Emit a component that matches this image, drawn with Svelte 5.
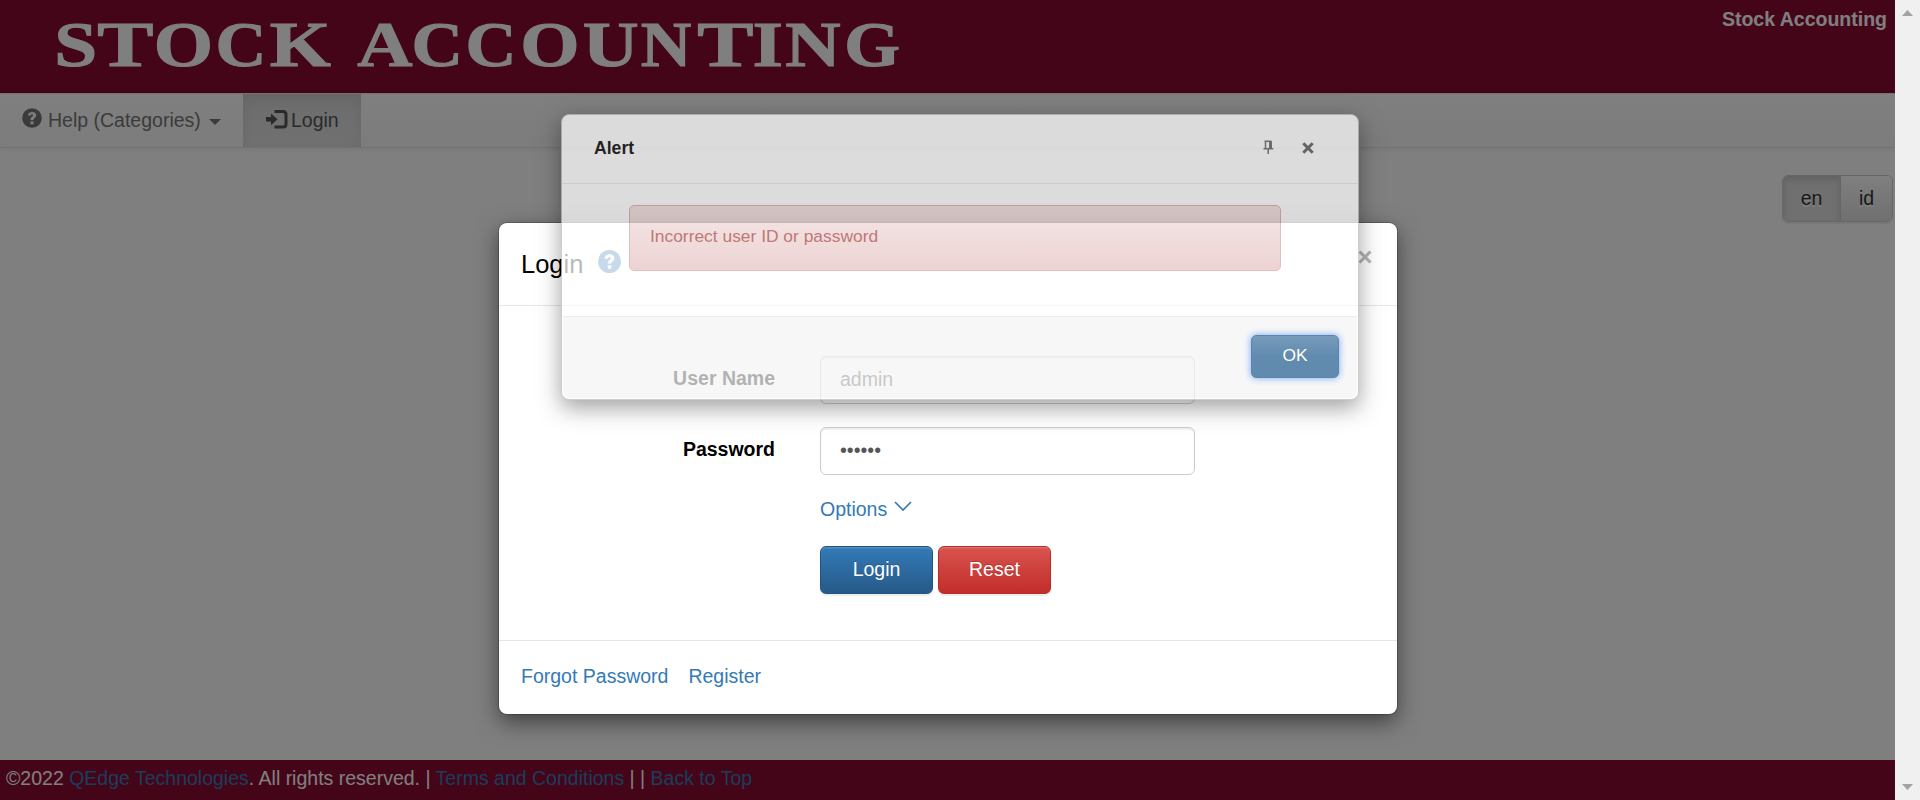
<script>
  const logoSize = 63.5;
  // each glyph: character, drawn left and right edge, then side bearings and advance in em/1000
  const logo = [
    ['S', 57, 94, 35, 514, 556], ['T', 100, 151, 31, 636, 667], ['O', 156.5, 210.5, 35, 743, 778],
    ['C', 219, 264, 49, 687, 722], ['K', 272, 330, 30, 769, 778], [' '],
    ['A', 358, 410, 9, 689, 722], ['C', 415, 460.5, 49, 687, 722], ['C', 469, 514, 49, 687, 722],
    ['O', 523, 577, 35, 743, 778], ['U', 584, 637, 16, 701, 722], ['N', 642, 690, 16, 701, 722],
    ['T', 700, 751, 31, 636, 667], ['I', 754, 781.5, 20, 370, 389], ['N', 786.5, 839, 16, 701, 722],
    ['G', 847, 898.5, 37, 755, 778]
  ].map(([ch, x0, x1, l, r, adv]) => {
    if (ch === ' ') return { ch, x: 335, len: 15 };
    const unit = (x1 - x0) / (r - l);
    return { ch, x: x0 - l * unit, len: adv * unit };
  });
  let user = $state('admin');
  let password = $state('secret');
</script>

<svelte:head><title>Stock Accounting</title></svelte:head>

<div class="screen">
  <div class="page">
    <header>
      <svg class="logo" width="940" height="93" role="img" aria-label="Stock Accounting">
        <text y="65.7" font-size={logoSize}>{#each logo as g}<tspan x={g.x} textLength={g.len} lengthAdjust="spacingAndGlyphs">{g.ch}</tspan>{/each}</text>
      </svg>
      <strong>Stock Accounting</strong>
    </header>
    <nav>
      <a class="help" href="#help">
        <svg width="20" height="20" viewBox="0 0 20 20"><circle cx="10" cy="10" r="9.8" fill="currentColor"/><path d="M5.9 7.6C5.9 2.9 14.2 2.9 14.2 7.2C14.2 9.8 11.5 9.7 11.5 12H8.6C8.6 8.7 11 8.9 11 7.3C11 5.9 8.8 6 8.8 7.6ZM8.5 13.3h3v3H8.5z" fill="#fbfbfb"/></svg>
        <span>Help (Categories)</span><i class="caret"></i>
      </a>
      <a class="current" href="#login">
        <svg width="22" height="19" viewBox="0 0 22 19"><path d="M0 7h5V3.4L11.5 9.3 5 15.2V11.5H0z" fill="currentColor"/><path d="M8.5 1.5H17Q20 1.5 20 4.5V14Q20 17 17 17H8.5" fill="none" stroke="currentColor" stroke-width="3"/></svg>
        <span>Login</span>
      </a>
    </nav>
    <main><div class="lang"><button class="on">en</button><button>id</button></div></main>
    <footer>©2022 <a href="#qedge">QEdge Technologies</a>. All rights reserved. | <a href="#terms">Terms and Conditions</a> | | <a href="#top">Back to Top</a></footer>
    <div class="backdrop"></div>

    <section class="modal">
      <div class="modal-head">
        <h4>Login</h4>
        <svg class="q" width="23" height="23" viewBox="0 0 20 20"><circle cx="10" cy="10" r="10" fill="#337ab7"/><path d="M5.7 7.6C5.7 2.6 14.3 2.6 14.3 7.2C14.3 9.8 11.6 9.8 11.6 11.8H8.6C8.6 8.4 11 8.8 11 7.3C11 5.9 8.8 6 8.8 7.6ZM8.5 13.2h3.1v3.2H8.5z" fill="#fff"/></svg>
        <svg class="x" width="14" height="14" viewBox="0 0 14 14"><path d="M1.5 1.5l11 11M12.5 1.5l-11 11" stroke="#b3b3b3" stroke-width="3"/></svg>
      </div>
      <form>
        <label for="user">User Name</label><input id="user" bind:value={user} />
        <label for="pass">Password</label><input id="pass" type="password" bind:value={password} />
        <a class="options" href="#options">Options <svg width="18" height="11" viewBox="0 0 18 11"><path d="M1 1l8 8 8-8" fill="none" stroke="currentColor" stroke-width="1.7"/></svg></a>
        <div class="actions"><button type="button" class="primary">Login</button><button type="button" class="danger">Reset</button></div>
      </form>
      <div class="modal-foot"><a href="#forgot">Forgot Password</a><a href="#register">Register</a></div>
    </section>

    <section class="alert">
      <div class="alert-head">
        <b>Alert</b>
        <svg width="11" height="15" viewBox="0 0 11 15"><path d="M2.5 1.2V8M1.5 1.2H8.3M.5 8.8H10.3M5.2 9V14" fill="none" stroke="#666" stroke-width="1.5"/><path d="M6 1h3v7.5H6z" fill="#666"/></svg>
        <svg class="ax" width="12" height="12" viewBox="0 0 12 12"><path d="M1.3 1.3l9.4 9.4M10.7 1.3l-9.4 9.4" stroke="#5c5c5c" stroke-width="3"/></svg>
      </div>
      <div class="alert-body"><div class="message">Incorrect user ID or password</div></div>
      <div class="alert-foot"><button>OK</button></div>
    </section>
  </div>
  <aside>
    <svg width="11" height="6"><path d="M0 6L5.5 0 11 6z" fill="#a3a3a3"/></svg>
    <svg width="11" height="6"><path d="M0 0L5.5 6 11 0z" fill="#a3a3a3"/></svg>
  </aside>
</div>

<style>
  :global(body) { overflow: hidden; }
  .screen, .screen * { box-sizing: border-box; }
  .screen { display: flex; width: 1920px; height: 800px; font: 19.5px/28px "Liberation Sans", Arial, sans-serif; color: #000; }
  a { color: #337ab7; text-decoration: none; }
  button, input { font: inherit; margin: 0; }
  svg { flex: none; }
  .page { position: relative; width: 1895px; display: flex; flex-direction: column; background: #fff; overflow: hidden; }
  header { height: 93px; background: #8a0a32; color: #fff; display: flex; justify-content: space-between; padding: 5px 8px 0 0; }
  header strong { font-size: 19.5px; line-height: 28px; }
  .logo { margin-top: -5px; fill: #fff; stroke: #fff; stroke-width: 1px; font-family: "Liberation Serif", serif; font-weight: 700; }
  nav { height: 55px; display: flex; border: solid #e5e5e5; border-width: 1px 0; background: linear-gradient(#fff, #f8f8f8); box-shadow: 0 1.5px 7px rgba(0,0,0,.075); }
  nav a { display: flex; align-items: center; color: #777; padding-bottom: 2px; }
  .help { width: 243px; padding-left: 22px; }
  .help svg { margin: -3px 6px 0 0; }
  .caret { border: 6px solid transparent; border-top-color: currentColor; border-bottom: 0; margin: 5px 0 0 8px; }
  .current { width: 118px; padding-left: 23px; color: #555; background: linear-gradient(#d9d9d9, #e2e2e2); box-shadow: inset 0 4px 13px rgba(0,0,0,.075); }
  .current svg { margin: 0 3px 0 0; }
  main { flex: 1; display: flex; justify-content: flex-end; align-items: flex-start; padding: 27px 2px 0 0; }
  .lang { display: flex; width: 111px; height: 47px; border: 1px solid #ccc; border-radius: 6px; overflow: hidden; box-shadow: 0 1.5px 1.5px rgba(0,0,0,.075); }
  .lang button { flex: 1; padding: 0 0 2px; border: 0; color: #333; text-shadow: 0 1.5px 0 #fff; background: linear-gradient(#fff, #e0e0e0); }
  .lang .on { flex: 0 0 58px; background: #e0e0e0; border-right: 1px solid #ccc; box-shadow: inset 0 4px 7px rgba(0,0,0,.125); }
  footer { height: 40px; padding: 4px 0 0 6px; background: #8a0a32; color: #fff; line-height: 28px; white-space: nowrap; }
  .backdrop { position: absolute; inset: 0; background: rgba(0,0,0,.5); }
  .modal { position: absolute; left: 499px; top: 223px; width: 898px; height: 491px; display: flex; flex-direction: column; background: #fff; border-radius: 8px; box-shadow: 0 0 0 1px rgba(0,0,0,.2), 0 7.5px 22.5px rgba(0,0,0,.5); }
  .modal-head { height: 83px; display: flex; align-items: center; padding: 0 25px 1px 22px; border-bottom: 1px solid #e5e5e5; }
  h4 { margin: 0; font-size: 25.5px; font-weight: 400; }
  .q { margin: -4px 0 0 15px; }
  .x { margin: -13px 0 0 auto; }
  form { height: 334px; display: grid; grid-template: 48px 48px 24px 48px / 276px 375px; gap: 23px 45px; align-content: start; padding-top: 50px; }
  label { text-align: right; font-weight: 700; line-height: 45px; }
  input { width: 375px; height: 48px; padding: 0 19px 2px; border: 1px solid #ccc; border-radius: 6px; color: #555; outline: 0; background: #fff; box-shadow: inset 0 1.5px 1.5px rgba(0,0,0,.075); }
  .options, .actions { grid-column: 2; }
  .options { line-height: 22px; white-space: nowrap; }
  .options svg { margin: 0 0 4px 1px; }
  .actions { display: flex; gap: 5px; margin-top: 1px; }
  .actions button { width: 113px; height: 48px; padding: 0 0 2px; color: #fff; border: 1px solid #245580; border-radius: 6px; background: linear-gradient(#337ab7, #265a88); text-shadow: 0 -1.5px 0 rgba(0,0,0,.2); box-shadow: inset 0 1.5px 0 rgba(255,255,255,.15), 0 1.5px 1.5px rgba(0,0,0,.075); }
  .actions .danger { border-color: #b92c28; background: linear-gradient(#d9534f, #c12e2a); }
  .modal-foot { flex: 1; display: flex; align-items: center; gap: 20px; padding: 0 22px 3px; border-top: 1px solid #e5e5e5; }
  .alert { position: absolute; left: 561px; top: 114px; width: 798px; height: 286px; display: flex; flex-direction: column; background: #fff; border: 1px solid #bbb; border-radius: 8px; opacity: .725; box-shadow: 0 7.5px 22.5px rgba(0,0,0,.5); font-size: 17.4px; }
  .alert-head { height: 69px; display: flex; align-items: center; padding: 0 44px 3px 32px; border-bottom: 1px solid #eaeaea; }
  .alert-head b { flex: 1; font-size: 17.6px; color: #000; }
  .ax { margin-left: 28px; }
  .alert-body { height: 133px; padding: 21px 77px 0 67px; }
  .message { height: 66px; padding: 16px 20px; border: 1px solid #dca7a7; border-radius: 5px; color: #a94442; background: linear-gradient(#f2dede, #e7c3c3); }
  .alert-foot { flex: 1; display: flex; justify-content: flex-end; align-items: flex-start; padding: 18px 18px 0 0; margin: -1px 1px 1px; border-top: 1px solid #e5e5e5; background: #f4f4f4; border-radius: 0 0 7px 7px; }
  .alert-foot button { width: 88px; height: 43px; padding: 0 0 3px; color: #fff; border: 1px solid #20588a; border-radius: 5px; background: linear-gradient(#4477a0, #265f92 50%); box-shadow: 0 0 7px #3d83f5; }
  aside { width: 25px; display: flex; flex-direction: column; align-items: center; justify-content: space-between; padding: 10px 0; background: #f0f0f0; }
</style>
